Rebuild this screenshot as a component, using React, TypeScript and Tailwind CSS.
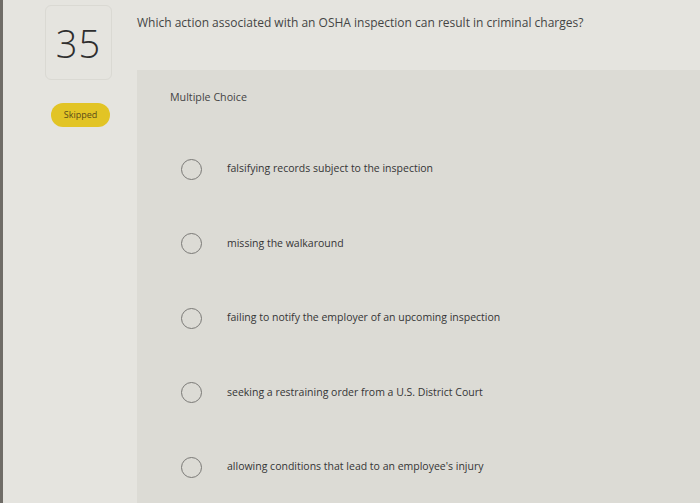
const options = [
  'falsifying records subject to the inspection',
  'missing the walkaround',
  'failing to notify the employer of an upcoming inspection',
  'seeking a restraining order from a U.S. District Court',
  "allowing conditions that lead to an employee's injury",
];

export default function App() {
  return (
    <div
      className="flex h-[503px] w-[700px] overflow-hidden border-l-[3px] border-[#6f6c67] bg-[#e5e4df] text-[#3b3b3b]"
      style={{ fontFamily: '"Open Sans", "Liberation Sans", sans-serif' }}
    >
      <div className="flex w-[134px] shrink-0 flex-col">
        <div className="ml-[42px] mt-[5px] flex h-[75px] w-[67px] items-center justify-center rounded-md border border-[#dad9d3]">
          <span className="text-[38px] font-light leading-none tracking-[1px] text-[#2e2e2e]">35</span>
        </div>
        <div className="ml-[48px] mt-[23px] flex h-[24px] w-[59px] items-center justify-center rounded-full bg-[#e2c425]">
          <span className="text-[9px] text-[#5a4c18]">Skipped</span>
        </div>
      </div>

      <div className="flex flex-1 flex-col">
        <div className="pt-[14px] text-[12px] leading-[18px] text-[#444]">
          Which action associated with an OSHA inspection can result in criminal charges?
        </div>

        <div className="mt-[38px] flex flex-1 flex-col bg-[#dcdbd5] pb-[4px]">
          <div className="pl-[33px] pt-[20px] text-[10.7px] leading-[14px] text-[#444]">Multiple Choice</div>
          <div className="mt-[28px] flex flex-col">
            {options.map((o) => (
              <div key={o} className="flex h-[74.5px] items-center">
                <span className="ml-[44px] h-[21px] w-[21px] shrink-0 rounded-full border-[1.5px] border-[#7a7976]" />
                <span className="ml-[25px] text-[10.5px] text-[#353535]">{o}</span>
              </div>
            ))}
          </div>
        </div>
        <div className="h-[5px] bg-[#ecebe6]" />
      </div>
    </div>
  );
}
